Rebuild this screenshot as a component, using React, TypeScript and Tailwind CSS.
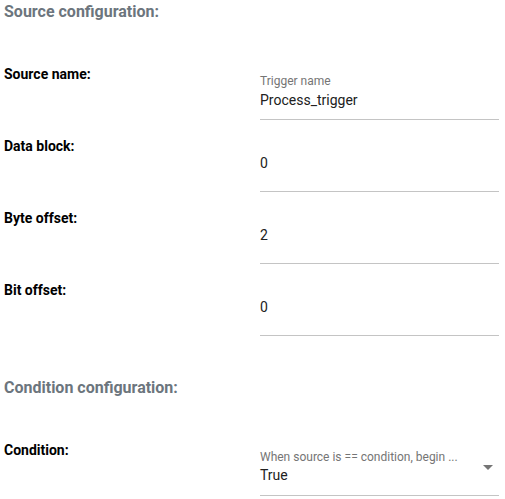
import React from 'react';

interface FieldRow {
  label: string;
  value: string;
  hint?: string;
}

const sourceRows: FieldRow[] = [
  { label: 'Source name:', value: 'Process_trigger', hint: 'Trigger name' },
  { label: 'Data block:', value: '0' },
  { label: 'Byte offset:', value: '2' },
  { label: 'Bit offset:', value: '0' },
];

const SectionTitle: React.FC<{ title: string; className?: string }> = ({ title, className }) => (
  <h2 className={`pl-[4px] text-[16px] leading-6 font-bold text-[#6c757d] ${className ?? ''}`}>{title}</h2>
);

const TextRow: React.FC<{ row: FieldRow }> = ({ row }) => (
  <div className="flex h-[72px]">
    <div className="w-[260px] pl-[4px] text-[14px] leading-5 font-bold text-black">{row.label}</div>
    <div className="w-[239px] h-[56px] border-b border-[#c4c4c4]">
      {row.hint ? (
        <div className="pt-[9px]">
          <div className="text-[12px] leading-4 text-[#757575]">{row.hint}</div>
          <div className="mt-[1px] text-[14px] leading-5 text-[#212121]">{row.value}</div>
        </div>
      ) : (
        <div className="pt-[17px] text-[14px] leading-5 text-[#212121]">{row.value}</div>
      )}
    </div>
  </div>
);

const App: React.FC = () => {
  return (
    <div className="w-[505px] h-[499px] bg-white overflow-hidden font-['Roboto',sans-serif]">
      <SectionTitle title="Source configuration:" />
      <div className="mt-[40px]">
        {sourceRows.map((row) => (
          <TextRow key={row.label} row={row} />
        ))}
      </div>
      <SectionTitle title="Condition configuration:" className="mt-[24px]" />
      <div className="mt-[40px] flex">
        <div className="w-[260px] pl-[4px] text-[14px] leading-5 font-bold text-black">Condition:</div>
        <div className="relative w-[239px] h-[56px] border-b border-[#c4c4c4] pt-[9px]">
          <div className="text-[12px] leading-4 text-[#757575] whitespace-nowrap">When source is == condition, begin ...</div>
          <div className="text-[14px] leading-5 text-[#212121]">True</div>
          <svg className="absolute left-[218px] top-[18px]" width="20" height="20" viewBox="0 0 20 20">
            <path d="M5 7l5 5 5-5z" fill="#757575" />
          </svg>
        </div>
      </div>
    </div>
  );
};

export default App;
